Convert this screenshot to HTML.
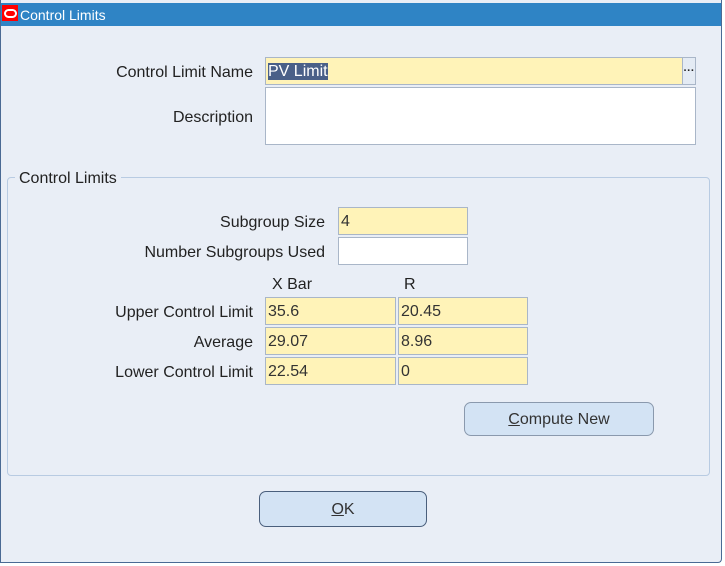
<!DOCTYPE html>
<html><head><style>
body{margin:0;width:725px;height:566px;background:#fff;font-family:"Liberation Sans",sans-serif;font-size:16px;color:#222;position:relative;overflow:hidden}
.win{position:absolute;left:0;top:0;width:722px;height:563px;background:#e9eef6;border:1px solid #4a6a94;border-top:none;border-radius:0 0 4px 0;box-sizing:border-box}
.title{position:absolute;left:0px;top:3px;width:720px;height:23px;background:#2f84c5;color:#fff;font-size:14px;line-height:24px}
.title span{position:absolute;left:19px;top:0}
.logo{position:absolute;left:1px;top:2px;width:16px;height:16px;background:#f00}
.logo:after{content:"";position:absolute;left:2px;top:4px;width:9px;height:5px;border:2px solid #fff;border-radius:5px}
.a{position:absolute}
.lbl{position:absolute;text-align:right;white-space:nowrap}
.f{position:absolute;box-sizing:border-box;border:1px solid #a9b6c8;background:#fff3b8;padding-left:2px;line-height:27px;color:#333}
.w{background:#fff}
.grp{position:absolute;left:6px;top:177px;width:703px;height:299px;border:1px solid #b8cbe2;border-radius:4px;box-sizing:border-box}
.btn{position:absolute;box-sizing:border-box;border:1px solid #8a99ad;border-radius:7px;background:#d3e3f4;text-align:center;color:#333;font-size:16px}
</style></head><body>
<div class="win">
<div class="title"><div class="logo"></div><span>Control Limits</span></div>
<div class="lbl" style="right:468px;top:64px">Control Limit Name</div>
<div class="f" style="left:264px;top:57px;width:418px;height:28px"><span style="background:#4a6088;color:#fff">PV Limit</span></div>
<div class="a" style="left:681px;top:57px;width:14px;height:28px;background:#e4ebf4;border:1px solid #a9b6c8;box-sizing:border-box;font-size:11px;line-height:26px;text-align:center;font-weight:bold">···</div>
<div class="lbl" style="right:468px;top:109px">Description</div>
<div class="f w" style="left:264px;top:87px;width:431px;height:58px"></div>
<div class="grp"></div>
<div class="a" style="left:14px;top:170px;background:#e9eef6;padding:0 4px">Control Limits</div>
<div class="lbl" style="right:396px;top:214px">Subgroup Size</div>
<div class="f" style="left:337px;top:207px;width:130px;height:28px">4</div>
<div class="lbl" style="right:396px;top:244px">Number Subgroups Used</div>
<div class="f w" style="left:337px;top:237px;width:130px;height:28px"></div>
<div class="a" style="left:271px;top:276px">X Bar</div>
<div class="a" style="left:403px;top:276px">R</div>
<div class="lbl" style="right:468px;top:304px">Upper Control Limit</div>
<div class="f" style="left:264px;top:297px;width:131px;height:28px">35.6</div>
<div class="f" style="left:397px;top:297px;width:130px;height:28px">20.45</div>
<div class="lbl" style="right:468px;top:334px">Average</div>
<div class="f" style="left:264px;top:327px;width:131px;height:28px">29.07</div>
<div class="f" style="left:397px;top:327px;width:130px;height:28px">8.96</div>
<div class="lbl" style="right:468px;top:364px">Lower Control Limit</div>
<div class="f" style="left:264px;top:357px;width:131px;height:28px">22.54</div>
<div class="f" style="left:397px;top:357px;width:130px;height:28px">0</div>
<div class="btn" style="left:463px;top:402px;width:190px;height:34px;line-height:34px"><u>C</u>ompute New</div>
<div class="btn" style="left:258px;top:491px;width:168px;height:36px;line-height:36px;border-color:#4a5f7c"><u>O</u>K</div>
</div>
</body></html>
